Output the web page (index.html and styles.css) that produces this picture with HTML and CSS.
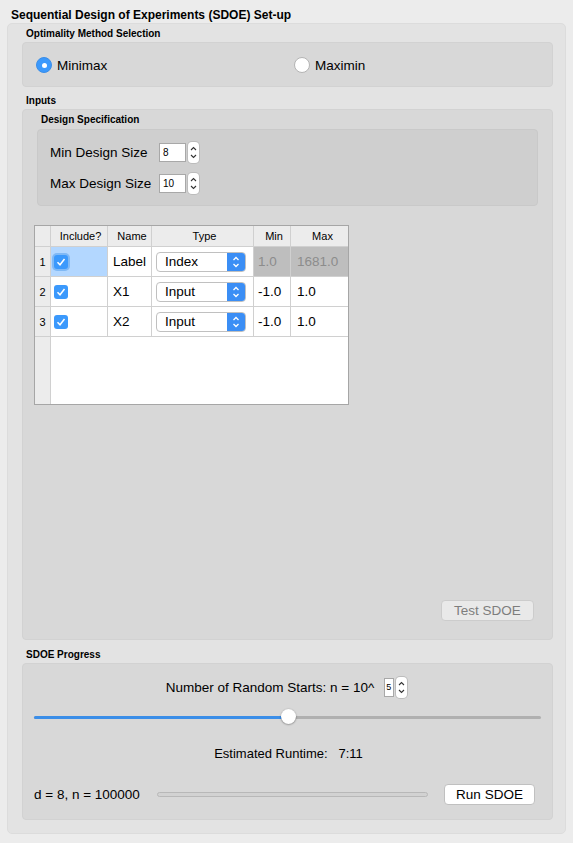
FILE: index.html
```html
<!DOCTYPE html>
<html lang="en">
<head>
  <meta charset="UTF-8" />
  <title>SDOE Set-up</title>
  <link rel="stylesheet" href="styles.css">
</head>
<body>
  <div class="title">Sequential Design of Experiments (SDOE) Set-up</div>
  <div class="outer">
    <div class="section-label first">Optimality Method Selection</div>
    <div class="group method">
      <label class="radio-opt"><span class="radio on"></span>Minimax</label>
      <label class="radio-opt"><span class="radio"></span>Maximin</label>
    </div>

    <div class="section-label inputs-label">Inputs</div>
    <div class="group inputs">
      <div class="section-label sub">Design Specification</div>
      <div class="spec">
        <div class="spec-row">
          <span class="spec-name">Min Design Size</span>
          <span class="spin"><span class="spin-box">8</span><span class="stepper"><svg width="11" height="21" viewBox="0 0 11 21"><path d="M3 8 L5.5 5.5 L8 8 M3 13 L5.5 15.5 L8 13" fill="none" stroke="#333" stroke-width="1.1"/></svg></span></span>
        </div>
        <div class="spec-row">
          <span class="spec-name">Max Design Size</span>
          <span class="spin"><span class="spin-box">10</span><span class="stepper"><svg width="11" height="21" viewBox="0 0 11 21"><path d="M3 8 L5.5 5.5 L8 8 M3 13 L5.5 15.5 L8 13" fill="none" stroke="#333" stroke-width="1.1"/></svg></span></span>
        </div>
      </div>

      <div class="table">
        <div class="trow head">
          <div class="c rh"></div>
          <div class="c inc">Include?</div>
          <div class="c name">Name</div>
          <div class="c type">Type</div>
          <div class="c min">Min</div>
          <div class="c max">Max</div>
        </div>
        <div class="trow">
          <div class="c rh">1</div>
          <div class="c inc selected"><span class="check focus"><svg width="14" height="14" viewBox="0 0 14 14"><path d="M3.5 7.2 L6 9.8 L10.5 4" fill="none" stroke="#fff" stroke-width="1.5"/></svg></span></div>
          <div class="c name">Label</div>
          <div class="c type"><span class="combo">Index<span class="cap"><svg width="18" height="18" viewBox="0 0 18 18"><path d="M6.5 7 L9 4.5 L11.5 7 M6.5 11 L9 13.5 L11.5 11" fill="none" stroke="#fff" stroke-width="1.3"/></svg></span></span></div>
          <div class="c min dis">1.0</div>
          <div class="c max dis">1681.0</div>
        </div>
        <div class="trow">
          <div class="c rh">2</div>
          <div class="c inc"><span class="check"><svg width="14" height="14" viewBox="0 0 14 14"><path d="M3.5 7.2 L6 9.8 L10.5 4" fill="none" stroke="#fff" stroke-width="1.5"/></svg></span></div>
          <div class="c name">X1</div>
          <div class="c type"><span class="combo">Input<span class="cap"><svg width="18" height="18" viewBox="0 0 18 18"><path d="M6.5 7 L9 4.5 L11.5 7 M6.5 11 L9 13.5 L11.5 11" fill="none" stroke="#fff" stroke-width="1.3"/></svg></span></span></div>
          <div class="c min">-1.0</div>
          <div class="c max">1.0</div>
        </div>
        <div class="trow">
          <div class="c rh">3</div>
          <div class="c inc"><span class="check"><svg width="14" height="14" viewBox="0 0 14 14"><path d="M3.5 7.2 L6 9.8 L10.5 4" fill="none" stroke="#fff" stroke-width="1.5"/></svg></span></div>
          <div class="c name">X2</div>
          <div class="c type"><span class="combo">Input<span class="cap"><svg width="18" height="18" viewBox="0 0 18 18"><path d="M6.5 7 L9 4.5 L11.5 7 M6.5 11 L9 13.5 L11.5 11" fill="none" stroke="#fff" stroke-width="1.3"/></svg></span></span></div>
          <div class="c min">-1.0</div>
          <div class="c max">1.0</div>
        </div>
        <div class="trow empty">
          <div class="c rh"></div>
          <div class="fill"></div>
        </div>
      </div>

      <div class="btn-row">
        <button class="btn disabled">Test SDOE</button>
      </div>
    </div>

    <div class="section-label progress-label">SDOE Progress</div>
    <div class="group progress">
      <div class="starts">
        Number of Random Starts: n = 10^
        <span class="spin small"><span class="spin-box">5</span><span class="stepper"><svg width="11" height="21" viewBox="0 0 11 21"><path d="M3 8 L5.5 5.5 L8 8 M3 13 L5.5 15.5 L8 13" fill="none" stroke="#333" stroke-width="1.1"/></svg></span></span>
      </div>
      <div class="slider">
        <div class="track"><div class="done"></div></div>
        <div class="thumb"></div>
      </div>
      <div class="runtime">Estimated Runtime:&nbsp;&nbsp; 7:11</div>
      <div class="run-row">
        <span class="dn">d = 8, n = 100000</span>
        <div class="bar"></div>
        <button class="btn run">Run SDOE</button>
      </div>
    </div>
  </div>
</body>
</html>
```

FILE: styles.css
```css
body {
  margin: 0;
  background: #ececec;
  font-family: 'Liberation Sans', Arial, sans-serif;
  font-size: 13px;
  color: #000;
  width: 573px;
  height: 843px;
}
.title {
  font-weight: bold;
  font-size: 12px;
  line-height: 14px;
  padding: 8px 11px 1px;
}
.outer {
  margin: 0 7px;
  height: 811px;
  background: #e3e3e3;
  border: 1px solid #dcdcdc;
  border-radius: 5px;
  padding: 0 12px 0 14px;
  box-sizing: border-box;
}
.section-label {
  font-weight: bold;
  font-size: 10px;
  line-height: 12px;
  padding: 4px 4px 2px;
}
.inputs-label {
  padding: 8px 4px 2px;
}
.progress-label {
  padding: 9px 4px 2px;
}
.section-label.sub {
  padding: 4px 4px 3px;
}
.group {
  background: #d8d8d8;
  border: 1px solid #d2d2d2;
  border-radius: 4px;
  box-sizing: border-box;
}
.method {
  height: 45px;
  display: flex;
  align-items: center;
  padding-left: 13px;
  padding-top: 1px;
}
.radio-opt {
  display: flex;
  align-items: center;
  gap: 5px;
  width: 258px;
  font-size: 13.5px;
}
.radio {
  width: 16px;
  height: 16px;
  border-radius: 50%;
  background: #fff;
  border: 1px solid #b4b4b4;
  box-sizing: border-box;
  position: relative;
}
.radio.on {
  background: #3b99fc;
  border-color: #3b8ee8;
}
.radio.on::after {
  content: "";
  position: absolute;
  left: 4.5px;
  top: 4.5px;
  width: 5px;
  height: 5px;
  border-radius: 50%;
  background: #fff;
}
.inputs {
  height: 531px;
  padding: 0 14px;
  display: flex;
  flex-direction: column;
}
.spec {
  background: #cfcfcf;
  border: 1px solid #c9c9c9;
  border-radius: 4px;
  height: 77px;
  box-sizing: border-box;
  padding: 12px 12px 0;
  display: flex;
  flex-direction: column;
  gap: 11px;
}
.spec-row {
  display: flex;
  align-items: center;
  height: 20px;
  font-size: 13.5px;
}
.spec-name {
  width: 109px;
}
.spin {
  display: inline-flex;
  align-items: center;
  gap: 2px;
}
.spin-box {
  width: 27px;
  height: 19px;
  background: #fff;
  border: 1px solid #a8a8a8;
  box-sizing: border-box;
  font-size: 10px;
  line-height: 17px;
  padding-left: 3px;
}
.stepper {
  width: 11px;
  height: 21px;
  background: #fff;
  border-radius: 4px;
  box-shadow: 0 0 0 1px #bcbcbc;
  display: flex;
}
.table {
  margin: 19px 0 0 -3px;
  width: 315px;
  height: 180px;
  border: 1px solid #a6a6a6;
  background: #fff;
  box-sizing: border-box;
  display: flex;
  flex-direction: column;
}
.trow {
  display: flex;
  height: 30px;
  border-bottom: 1px solid #d0d0d0;
  box-sizing: border-box;
  font-size: 13.5px;
}
.trow.head {
  height: 21px;
  background: #ececec;
  font-size: 11px;
}
.trow.empty {
  flex: 1;
  border-bottom: none;
}
.fill {
  flex: 1;
}
.c {
  display: flex;
  align-items: center;
  border-right: 1px solid #d0d0d0;
  box-sizing: border-box;
}
.head .c {
  justify-content: center;
}
.rh {
  width: 16px;
  background: #ececec;
  font-size: 11px;
  justify-content: center;
}
.inc { width: 57px; padding-left: 3px; }
.name { width: 44px; padding-left: 5px; }
.type { width: 102px; padding-left: 4px; }
.min { width: 37px; padding-left: 4px; }
.max { width: 57px; padding-left: 6px; border-right: none; }
.selected {
  background: #b3d7ff;
}
.dis {
  background: #bebebe;
  color: #8c8c8c;
}
.check {
  width: 14px;
  height: 14px;
  border-radius: 3px;
  background: #3b99fc;
  display: flex;
}
.check.focus {
  box-shadow: 0 0 0 2px #80b9f5;
}
.combo {
  width: 90px;
  height: 20px;
  background: #fff;
  border: 1px solid #c0c0c0;
  border-radius: 4px;
  box-sizing: border-box;
  display: flex;
  align-items: center;
  justify-content: space-between;
  padding-left: 8px;
  overflow: hidden;
}
.cap {
  width: 18px;
  height: 18px;
  background: #3b8ef5;
  display: flex;
}
.btn-row {
  margin-top: auto;
  margin-bottom: 18px;
  display: flex;
  justify-content: flex-end;
  padding-right: 4px;
}
.btn {
  font-family: inherit;
  font-size: 13.5px;
  height: 21px;
  background: #fff;
  border: 1px solid #c0c0c0;
  border-radius: 4px;
  padding: 0;
  color: #000;
}
.btn.disabled {
  width: 93px;
  background: #e9e9e9;
  color: #7d7d7d;
  border-color: #cccccc;
}
.progress {
  height: 157px;
  padding: 0 11px;
}
.starts {
  margin-top: 12px;
  height: 22px;
  display: flex;
  align-items: center;
  justify-content: center;
  gap: 10px;
  font-size: 13.5px;
  padding-right: 2px;
}
.spin.small .spin-box {
  width: 10px;
  padding-left: 1px;
  font-size: 9px;
}
.slider {
  position: relative;
  height: 16px;
  margin-top: 11px;
  display: flex;
  align-items: center;
}
.track {
  width: 100%;
  height: 3px;
  background: #b0b0b0;
  border-radius: 2px;
}
.done {
  width: 50%;
  height: 3px;
  background: #3b8ee8;
  border-radius: 2px;
}
.thumb {
  position: absolute;
  left: 247px;
  top: 0;
  width: 15px;
  height: 15px;
  border-radius: 50%;
  background: #fff;
  box-shadow: 0 0.5px 2px rgba(0,0,0,0.45);
}
.runtime {
  margin-top: 21px;
  text-align: center;
  font-size: 13px;
  padding-left: 2px;
}
.run-row {
  margin-top: 23px;
  display: flex;
  align-items: center;
  font-size: 13.5px;
}
.dn {
  width: 123px;
}
.bar {
  width: 271px;
  height: 5px;
  border: 1px solid #b8b8b8;
  background: #d2d2d2;
  border-radius: 3px;
  box-sizing: border-box;
}
.btn.run {
  margin-left: 16px;
  width: 91px;
}
```
